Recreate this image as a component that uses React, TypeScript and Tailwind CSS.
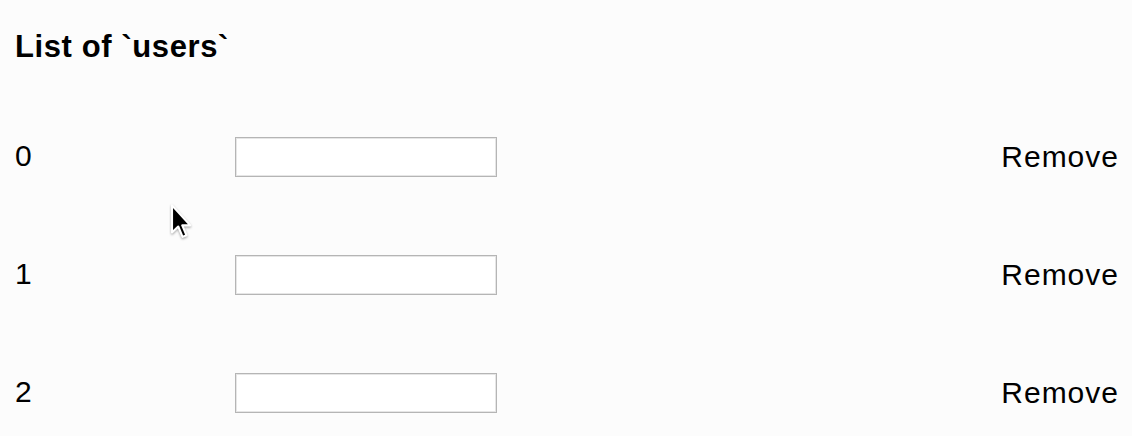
const rows = ["0", "1", "2"];

const Cursor = () => (
  <svg
    className="absolute left-[169px] top-[203px]"
    width="26"
    height="40"
    viewBox="0 0 22 34"
  >
    <path
      d="M2.5 2 L2.5 25 L7.8 20 L11.5 28.8 L14.8 27.4 L11.2 19 L18 19 Z"
      fill="#000"
      stroke="#fff"
      strokeWidth="1.8"
      strokeLinejoin="round"
      style={{ filter: "drop-shadow(0 1px 1px rgba(0,0,0,0.35))" }}
    />
  </svg>
);

export default function App() {
  return (
    <div
      className="relative w-[1132px] h-[436px] overflow-hidden bg-[#fcfcfc] text-black px-[15px] pt-[29px]"
      style={{ fontFamily: '"Liberation Sans", Arial, sans-serif' }}
    >
      <h2 className="text-[31px] leading-[36px] font-bold tracking-[0.6px]">
        List of `users`
      </h2>
      <div className="mt-[72px] flex flex-col gap-[78px]">
        {rows.map((r) => (
          <div key={r} className="flex items-center h-[40px]">
            <div className="w-[220px] text-[30px] leading-[40px] -mt-[3px]">{r}</div>
            <input
              type="text"
              className="w-[262px] h-[40px] bg-white border border-[#b5b5b5] shadow-[inset_0_0_0_1px_#e6e6e6] outline-none"
            />
            <button className="ml-auto -mr-[2px] text-[30px] leading-[40px] tracking-[1px]">
              Remove
            </button>
          </div>
        ))}
      </div>
      <Cursor />
    </div>
  );
}
